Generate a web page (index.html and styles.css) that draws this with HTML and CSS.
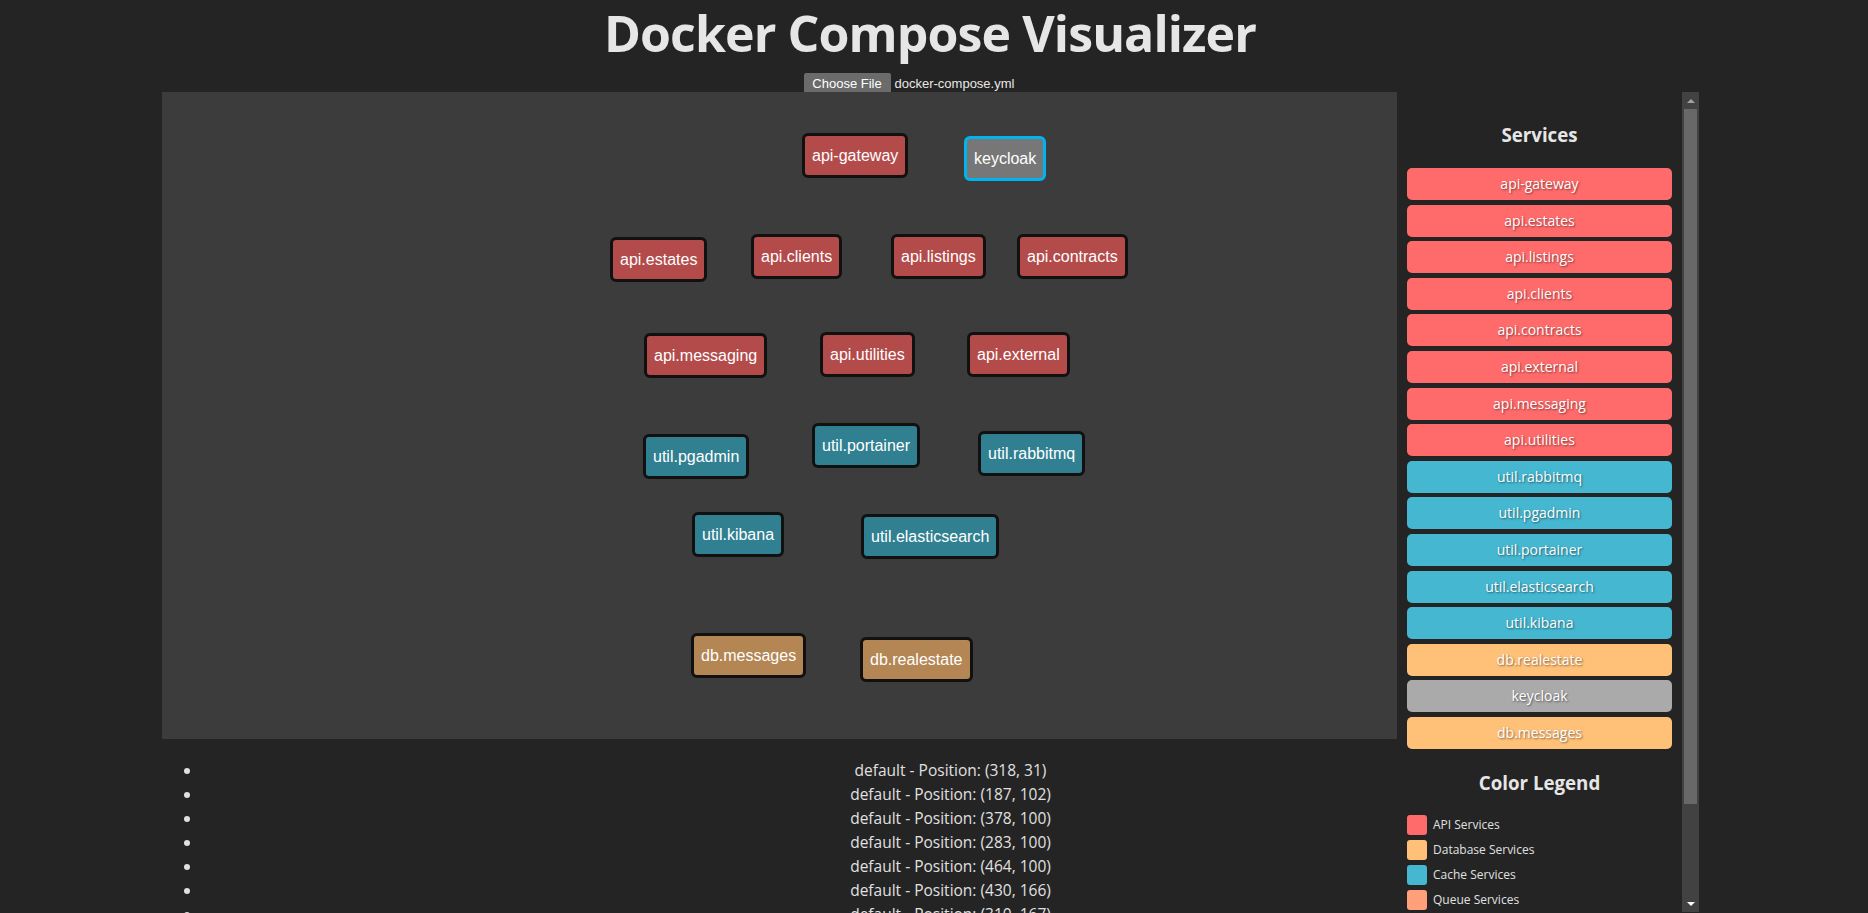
FILE: index.html
```html
<!DOCTYPE html>
<html lang="en">
<head>
<meta charset="utf-8">
<title>Docker Compose Visualizer</title>
<link rel="stylesheet" href="styles.css">
</head>
<body>
<div class="page">
  <h1 class="title">Docker Compose Visualizer</h1>
  <div class="upload">
    <span class="file-input"><span class="file-btn">Choose File</span><span class="file-name">docker-compose.yml</span></span>
  </div>
  <div class="workspace">
    <div class="canvas">
      <div class="node api" style="left:640px;top:41px">api-gateway</div>
      <div class="node other selected" style="left:802px;top:44px">keycloak</div>
      <div class="node api" style="left:448px;top:145px">api.estates</div>
      <div class="node api" style="left:589px;top:142px">api.clients</div>
      <div class="node api" style="left:729px;top:142px">api.listings</div>
      <div class="node api" style="left:855px;top:142px">api.contracts</div>
      <div class="node api" style="left:482px;top:241px">api.messaging</div>
      <div class="node api" style="left:658px;top:240px">api.utilities</div>
      <div class="node api" style="left:805px;top:240px">api.external</div>
      <div class="node util" style="left:481px;top:342px">util.pgadmin</div>
      <div class="node util" style="left:650px;top:331px">util.portainer</div>
      <div class="node util" style="left:816px;top:339px">util.rabbitmq</div>
      <div class="node util" style="left:530px;top:420px">util.kibana</div>
      <div class="node util" style="left:699px;top:422px">util.elasticsearch</div>
      <div class="node db" style="left:529px;top:541px">db.messages</div>
      <div class="node db" style="left:698px;top:545px">db.realestate</div>
    </div>
    <aside class="sidebar">
      <div class="side-content">
        <h3 class="side-title">Services</h3>
        <div class="service-list">
          <div class="service api">api-gateway</div>
          <div class="service api">api.estates</div>
          <div class="service api">api.listings</div>
          <div class="service api">api.clients</div>
          <div class="service api">api.contracts</div>
          <div class="service api">api.external</div>
          <div class="service api">api.messaging</div>
          <div class="service api">api.utilities</div>
          <div class="service util">util.rabbitmq</div>
          <div class="service util">util.pgadmin</div>
          <div class="service util">util.portainer</div>
          <div class="service util">util.elasticsearch</div>
          <div class="service util">util.kibana</div>
          <div class="service db">db.realestate</div>
          <div class="service other">keycloak</div>
          <div class="service db">db.messages</div>
        </div>
        <h3 class="side-title legend-title">Color Legend</h3>
        <div class="legend">
          <div class="legend-item"><span class="swatch api"></span><span>API Services</span></div>
          <div class="legend-item"><span class="swatch db"></span><span>Database Services</span></div>
          <div class="legend-item"><span class="swatch util"></span><span>Cache Services</span></div>
          <div class="legend-item"><span class="swatch queue"></span><span>Queue Services</span></div>
        </div>
      </div>
      <div class="scrollbar" aria-hidden="true">
        <span class="sb-arrow up"></span>
        <span class="sb-track"><span class="sb-thumb"></span></span>
        <span class="sb-arrow down"></span>
      </div>
    </aside>
  </div>
  <ul class="positions">
    <li>default - Position: (318, 31)</li>
    <li>default - Position: (187, 102)</li>
    <li>default - Position: (378, 100)</li>
    <li>default - Position: (283, 100)</li>
    <li>default - Position: (464, 100)</li>
    <li>default - Position: (430, 166)</li>
    <li>default - Position: (310, 167)</li>
    <li>default - Position: (210, 168)</li>
    <li>default - Position: (425, 233)</li>
    <li>default - Position: (200, 236)</li>
    <li>default - Position: (312, 228)</li>
  </ul>
</div>
</body>
</html>
```

FILE: styles.css
```css
html {
  overflow: hidden;
}

body {
  margin: 0;
  background: #242424;
  color: #e0e0e0;
  font-family: "Open Sans", "Noto Sans", sans-serif;
}

.page {
  width: 1860px;
}

.title {
  margin: 0;
  padding-top: 1px;
  text-align: center;
  font-size: 50px;
  letter-spacing: -0.9px;
  line-height: 64px;
  font-weight: 700;
  color: #e6e6e6;
}

.upload {
  padding-top: 6px;
  height: 21px;
  text-align: center;
}

.file-input {
  display: inline-flex;
  width: 253px;
  height: 21px;
  align-items: center;
  text-align: left;
  font-family: "Liberation Sans", Arial, sans-serif;
  font-size: 13px;
}

.file-btn {
  display: inline-flex;
  align-items: center;
  justify-content: center;
  width: 87px;
  height: 21px;
  background: #6b6b6b;
  color: #ffffff;
  border-radius: 2px;
}

.file-name {
  margin-left: 4px;
  color: #e8e8e8;
}

.workspace {
  display: flex;
  margin-left: 162px;
  width: 1537px;
  height: 647px;
}

.canvas {
  position: relative;
  width: 1235px;
  height: 647px;
  background: #3c3c3c;
  flex: none;
}

.node {
  position: absolute;
  padding: 10px 7px;
  border: 3px solid #111111;
  border-radius: 6px;
  font-family: "Liberation Sans", Arial, sans-serif;
  font-size: 16px;
  line-height: 19px;
  color: #ffffff;
  white-space: nowrap;
}

.node.api { background: #b34b4b; }
.node.util { background: #308092; }
.node.db { background: #b38654; }
.node.other { background: #777777; }
.node.selected { border-color: #00b4f0; }

.sidebar {
  flex: none;
  display: flex;
  width: 302px;
  height: 821px;
}

.side-content {
  flex: 1;
  min-width: 0;
  padding: 10px;
  overflow: hidden;
}

.scrollbar {
  flex: none;
  display: flex;
  flex-direction: column;
  width: 17px;
  height: 820px;
  background: #424242;
}

.sb-arrow {
  flex: none;
  display: flex;
  align-items: center;
  justify-content: center;
  height: 17px;
}

.sb-arrow::before {
  content: "";
  width: 0;
  height: 0;
  border-left: 4px solid transparent;
  border-right: 4px solid transparent;
}

.sb-arrow.up::before {
  border-bottom: 4px solid #a3a3a3;
}

.sb-arrow.down::before {
  border-top: 4px solid #ffffff;
}

.sb-track {
  flex: 1;
  display: flex;
  flex-direction: column;
  padding: 0 2px;
}

.sb-thumb {
  height: 695px;
  background: #686868;
}

.side-title {
  margin: 21px 0 21px;
  text-align: center;
  font-size: 18.72px;
  line-height: 24px;
  font-weight: 700;
  color: #e6e6e6;
}

.service-list {
  display: flex;
  flex-direction: column;
  gap: 4.6px;
}

.service {
  height: 32px;
  line-height: 32px;
  border-radius: 5px;
  text-align: center;
  font-size: 14px;
  color: #ffffff;
  text-shadow: 1px 1px 2px rgba(0, 0, 0, 0.5);
}

.service.api, .swatch.api { background: #ff6b6b; }
.service.util, .swatch.util { background: #45b7d1; }
.service.db, .swatch.db { background: #ffc078; }
.service.other { background: #aaaaaa; }
.swatch.queue { background: #ffa07a; }

.legend-title {
  margin: 22px 0 20px;
}

.legend {
  display: flex;
  flex-direction: column;
  gap: 5px;
  padding-bottom: 14px;
}

.legend-item {
  display: flex;
  align-items: center;
  gap: 6px;
  height: 20px;
  font-size: 12px;
  color: #e0e0e0;
}

.swatch {
  width: 20px;
  height: 20px;
  border-radius: 3px;
  flex: none;
}

.positions {
  margin: 18.6px 0 0 162px;
  width: 1537px;
  box-sizing: border-box;
  padding-left: 40px;
  text-align: center;
  font-size: 15.5px;
  line-height: 24px;
}
```
